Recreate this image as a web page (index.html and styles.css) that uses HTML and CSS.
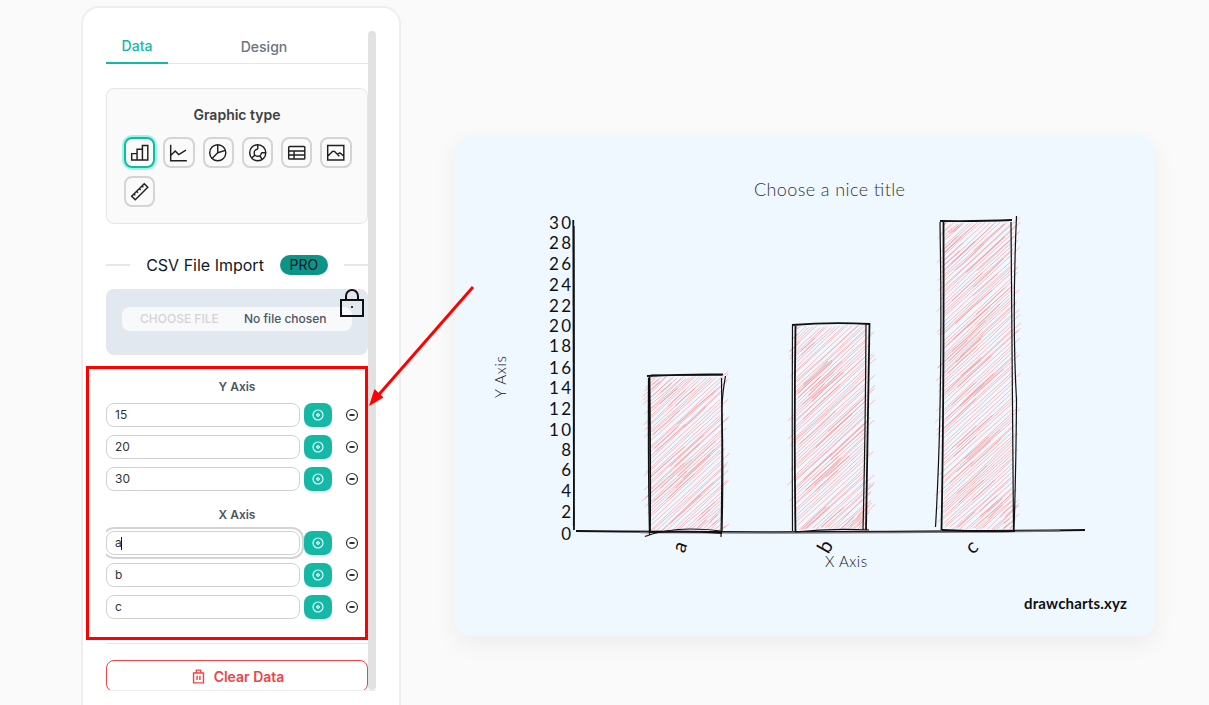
FILE: index.html
```html
<!DOCTYPE html>
<html>
<head>
  <meta charset="utf-8">
  <title>Draw Charts</title>
  <link rel="stylesheet" href="styles.css">
</head>
<body>

<div class="panel">
  <div class="scroll">
    <div class="scroll-body">
      <div class="tabs">
        <div class="tab active">Data</div>
        <div class="tab">Design</div>
      </div>

      <div class="typebox">
        <div class="typebox-title">Graphic type</div>
        <div class="types">
          <div class="type selected"><svg viewBox="0 0 24 24"><path d="M3 13h6v7H3zM9 8h6v12H9zM15 4h6v16h-6zM4 20h16"/></svg></div>
          <div class="type"><svg viewBox="0 0 24 24"><path d="M3 3v18h18M3 15l5-5 4 4 8-5"/></svg></div>
          <div class="type"><svg viewBox="0 0 24 24"><circle cx="12" cy="12" r="9"/><path d="M12 3v9l-6.400 6.400M12 12l8.600-2.600"/></svg></div>
          <div class="type"><svg viewBox="0 0 24 24"><path d="M8.848 14.667l-3.348 2.833M12 3v5m4 4h5M14.219 15.328l2.781 4.172"/><circle cx="12" cy="12" r="9"/><path d="M12 8a4 4 0 1 0 4 4"/></svg></div>
          <div class="type"><svg viewBox="0 0 24 24"><rect x="3" y="5" width="18" height="14" rx="1"/><path d="M3 10h18M3 14.500h18M9 10v9"/></svg></div>
          <div class="type"><svg viewBox="0 0 24 24"><path d="M3 4h18v16H3zM15 8h.01M3 16l5-5c.928-.893 2.072-.893 3 0l5 5M14 14l1-1c.928-.893 2.072-.893 3 0l3 3"/></svg></div>
          <div class="type"><svg viewBox="0 0 24 24"><path d="M17 3l4 4L7 21l-4-4zM16 7l-1.500-1.500M13 10l-1.500-1.500M10 13l-1.500-1.500M7 16l-1.500-1.500"/></svg></div>
        </div>
      </div>

      <div class="csv">
        <span class="csv-line"></span>
        <span class="csv-label">CSV File Import</span>
        <span class="pro">PRO</span>
        <span class="csv-line"></span>
      </div>

      <div class="filebox">
        <div class="fileinput">
          <span class="filebtn">CHOOSE FILE</span>
          <span class="filename">No file chosen</span>
        </div>
        <svg class="lock" viewBox="0 0 26 28"><path d="M2 11h22v16H2zM7 11V7a6 6 0 0 1 12 0v4"/><circle cx="13" cy="18" r="1.100"/></svg>
      </div>

      <div class="axis-title first">Y Axis</div>
      <div class="rows">
        <div class="row">
          <input class="cell" type="text" value="15">
          <div class="add"><svg viewBox="0 0 14 14"><circle cx="7" cy="7" r="5"/><path class="add-plus" d="M7 5v4M5 7h4"/></svg></div>
          <svg class="remove" viewBox="0 0 14 14"><circle cx="7" cy="7" r="5.500"/><path d="M4.500 7h5"/></svg>
        </div>
        <div class="row">
          <input class="cell" type="text" value="20">
          <div class="add"><svg viewBox="0 0 14 14"><circle cx="7" cy="7" r="5"/><path class="add-plus" d="M7 5v4M5 7h4"/></svg></div>
          <svg class="remove" viewBox="0 0 14 14"><circle cx="7" cy="7" r="5.500"/><path d="M4.500 7h5"/></svg>
        </div>
        <div class="row">
          <input class="cell" type="text" value="30">
          <div class="add"><svg viewBox="0 0 14 14"><circle cx="7" cy="7" r="5"/><path class="add-plus" d="M7 5v4M5 7h4"/></svg></div>
          <svg class="remove" viewBox="0 0 14 14"><circle cx="7" cy="7" r="5.500"/><path d="M4.500 7h5"/></svg>
        </div>
      </div>

      <div class="axis-title">X Axis</div>
      <div class="rows">
        <div class="row">
          <input class="cell" type="text" value="a" autofocus>
          <span class="caret"></span>
          <div class="add"><svg viewBox="0 0 14 14"><circle cx="7" cy="7" r="5"/><path class="add-plus" d="M7 5v4M5 7h4"/></svg></div>
          <svg class="remove" viewBox="0 0 14 14"><circle cx="7" cy="7" r="5.500"/><path d="M4.500 7h5"/></svg>
        </div>
        <div class="row">
          <input class="cell" type="text" value="b">
          <div class="add"><svg viewBox="0 0 14 14"><circle cx="7" cy="7" r="5"/><path class="add-plus" d="M7 5v4M5 7h4"/></svg></div>
          <svg class="remove" viewBox="0 0 14 14"><circle cx="7" cy="7" r="5.500"/><path d="M4.500 7h5"/></svg>
        </div>
        <div class="row">
          <input class="cell" type="text" value="c">
          <div class="add"><svg viewBox="0 0 14 14"><circle cx="7" cy="7" r="5"/><path class="add-plus" d="M7 5v4M5 7h4"/></svg></div>
          <svg class="remove" viewBox="0 0 14 14"><circle cx="7" cy="7" r="5.500"/><path d="M4.500 7h5"/></svg>
        </div>
      </div>

      <div class="sep"></div>

      <div class="clear">
        <svg viewBox="0 0 24 24"><path d="M4 7h16M10 11v6M14 11v6M5 7v14h14V7M9 7V3h6v4"/></svg>
        Clear Data
      </div>
    </div>
    <div class="scrollbar"></div>
  </div>
</div>

<div class="chart">
  <svg id="sketch" viewBox="455 136 700 500" width="700" height="500">
    <g id="hachure"></g>

    <g class="ink">
      <path class="thick" d="M573.300 220 Q573 380 574 530"/>
      <path d="M574 226 Q574.500 400 573.500 526"/>
      <path class="thick" d="M576 531 Q800 533.500 1085 530"/>
      <path class="grey" d="M640 532.500 Q850 534 1060 531"/>

      <path class="thick" d="M647 376 Q690 374 723 374.500"/>
      <path d="M651 375 Q690 375.500 722 375"/>
      <path class="thick" d="M649.500 377 Q650.500 460 650 533"/>
      <path d="M648.500 378 Q648 470 649.500 535"/>
      <path d="M721.500 378 Q722.500 460 721 537"/>
      <path d="M725.500 376 Q722 395 722 410 Q723.500 470 722 532"/>
      <path d="M645 536.500 Q665 529 690 529 Q710 529 723 531.500"/>
      <path class="thick" d="M651 532 Q690 531 722 533"/>

      <path class="thick" d="M792 325 Q830 322 870 324"/>
      <path class="thick" d="M795.500 326 Q794 430 795.500 532"/>
      <path d="M792.500 325 Q792 430 792.500 531"/>
      <path class="thick" d="M869.500 323 Q868 430 866 530"/>
      <path d="M866 323 Q865.500 430 863 530"/>
      <path d="M795 532 Q830 528 869 530"/>

      <path class="thick" d="M940 221 Q980 221.500 1012 220"/>
      <path class="thick" d="M943.500 221 Q944 400 941.500 530"/>
      <path d="M940 222 Q943 400 935.500 527"/>
      <path d="M1011 222 Q1013 400 1013.500 530"/>
      <path d="M1016.500 216 Q1012 320 1016.500 400 Q1016 470 1014 530"/>
      <path class="thick" d="M942 530 Q980 532 1015 531"/>
    </g>

    <text class="title" x="754" y="196" textLength="151">Choose a nice title</text>

    <g class="ticks">
      <text x="571" y="229" textLength="22">30</text>
      <text x="571" y="249" textLength="22">28</text>
      <text x="571" y="270" textLength="22">26</text>
      <text x="571" y="291" textLength="22">24</text>
      <text x="571" y="312" textLength="22">22</text>
      <text x="571" y="332" textLength="22">20</text>
      <text x="571" y="352" textLength="22">18</text>
      <text x="571" y="374" textLength="22">16</text>
      <text x="571" y="394" textLength="22">14</text>
      <text x="571" y="415" textLength="22">12</text>
      <text x="571" y="436" textLength="22">10</text>
      <text x="571" y="456">8</text>
      <text x="571" y="476">6</text>
      <text x="571" y="497">4</text>
      <text x="571" y="518">2</text>
      <text x="571" y="540">0</text>
    </g>

    <text class="xlabel" transform="translate(686 549) rotate(-70)">a</text>
    <text class="xlabel" transform="translate(831 550) rotate(-60)">b</text>
    <text class="xlabel" transform="translate(976 552) rotate(-40)">c</text>

    <text class="axis-name" x="825" y="567" textLength="42">X Axis</text>
    <text class="axis-name" transform="translate(506 398) rotate(-90)" textLength="42">Y Axis</text>

    <text class="mark" x="1024" y="609" textLength="103">drawcharts.xyz</text>
  </svg>
</div>

<svg class="annotation" viewBox="0 0 1209 705">
  <rect class="note-box" x="87.500" y="367.500" width="279" height="271"/>
  <path class="note-line" d="M473 287L375 399"/>
  <path class="note-head" d="M369 406L374.500 389L383.500 397.500z"/>
</svg>

<script src="chart.js"></script>
</body>
</html>
```
FILE: styles.css
```css
* {box-sizing: border-box;}
html, body {height: 100%;}
body {margin: 0; background-color: #fafafa; font-family: Inter, "Liberation Sans", sans-serif; display: flex; align-items: flex-start; overflow: hidden; position: relative;}

.panel {flex: none; width: 320px; height: 699px; margin: 6px 0 0 81px; padding: 23px 0 0 23px; background-color: #fff; border: 2px solid #eee; border-bottom: 0; border-radius: 18px 18px 0 0;}
.scroll {display: flex; width: 270px; height: 660px; border-bottom: 1px solid #eee;}
.scroll-body {flex: none; width: 262px; height: 659px; overflow: hidden;}
.scrollbar {flex: none; width: 8px; height: 659px; background-color: #e2e2e2; border-radius: 4px;}

.tabs {display: flex; height: 33px; border-bottom: 1px solid #e5e7eb;}
.tab {height: 33px; padding-top: 7px; font-size: 14px; font-weight: 500; line-height: 18px; color: #6b7280; text-align: center; width: 192px;}
.tab.active {width: 62px; padding-top: 6px; color: #14b8a6; border-bottom: 2px solid #14b8a6;}

.typebox {height: 136px; margin-top: 24px; padding: 16px 0 0 17px; background-color: #fafafa; border: 1px solid #e5e5e5; border-radius: 8px;}
.typebox-title {padding-right: 17px; font-size: 14px; font-weight: 600; line-height: 20px; color: #404040; text-align: center;}
.types {display: flex; flex-wrap: wrap; gap: 8px; margin-top: 12px;}
.type {width: 31.300px; height: 31px; display: flex; align-items: center; justify-content: center; border: 2px solid #d4d4d4; border-radius: 8px;}
.type.selected {border-color: #14b8a6; box-shadow: 0 0 0 2px #99f6e4;}
.type svg {flex: none; width: 21.500px; height: 21.500px; fill: none; stroke: #1f1f1f; stroke-width: 1.600;}

.csv {display: flex; align-items: center; gap: 16px; height: 20px; margin-top: 31px;}
.csv-line {flex: 1; height: 2px; background-color: #e5e7eb;}
.csv-label {font-size: 16px; line-height: 20px; color: #111827;}
.pro {width: 48px; height: 20px; font-size: 14px; line-height: 20px; color: #111827; text-align: center; background-color: #0d9488; border-radius: 10px;}

.filebox {position: relative; height: 66px; margin-top: 14px; padding: 18px 16px 0 16px; background-color: #e2e8f0; border-radius: 8px;}
.fileinput {display: flex; align-items: center; height: 24px; padding-left: 18px; padding-bottom: 1px; font-size: 12px; background-color: #f8f9fa; border-radius: 8px;}
.filebtn {width: 104px; font-weight: 500; color: #d4d4d4;}
.filename {font-weight: 500; color: #4b5563;}
.lock {position: absolute; top: 0; right: 3px; width: 26px; height: 28px; fill: none; stroke: #111; stroke-width: 2;}
.lock circle {fill: #111; stroke: none;}

.axis-title {margin-top: 16px; font-size: 12px; font-weight: 600; line-height: 16px; color: #4b5563; text-align: center;}
.axis-title.first {margin-top: 24px;}
.rows {display: flex; flex-direction: column; gap: 8px; margin-top: 8px;}
.row {position: relative; display: flex; align-items: center; height: 24px;}
.cell {width: 194px; height: 24px; padding: 0 8px 2px 8px; font-family: inherit; font-size: 12px; color: #333; background-color: #fff; border: 1px solid #d1d1d1; border-radius: 8px; outline: none;}
.cell:focus {caret-color: transparent; box-shadow: 0 0 0 2px #fff, 0 0 0 4px #d4d4d4;}
.caret {position: absolute; top: 6px; left: 15px; width: 1px; height: 13px; background-color: #111;}
.add {width: 28px; height: 24px; margin-left: 4px; display: flex; align-items: center; justify-content: center; background-color: #14b8a6; border-radius: 8px;}
.add svg {width: 14px; height: 14px; fill: none; stroke: #e6faf7; stroke-width: 1.200;}
.add-plus {stroke: #a7ebe2; stroke-width: 2;}
.remove {width: 14px; height: 14px; margin-left: 13px; fill: none; stroke: #333; stroke-width: 1.200;}
.remove path {stroke-width: 2;}

.sep {height: 1px; margin-top: 24px; background-color: #e5e7eb;}
.clear {display: flex; align-items: center; justify-content: center; gap: 7px; height: 32px; margin-top: 16px; font-size: 14px; font-weight: 600; color: #ef4444; border: 1px solid #ef4444; border-radius: 8px;}
.clear svg {width: 17px; height: 17px; fill: none; stroke: #ef4444; stroke-width: 2;}

.chart {flex: none; width: 700px; height: 500px; margin: 136px 0 0 54px; background-color: #f0f8ff; border-radius: 16px; box-shadow: 0 8px 24px rgba(0, 0, 0, .06);}
.chart svg {display: block; font-family: Lato, "Open Sans", sans-serif; font-weight: 300;}
.ink path {fill: none; stroke: #111; stroke-width: 1.200;}
.ink path.thick {stroke-width: 1.800;}
.ink path.grey {stroke: #777; stroke-width: 1.500;}
.title {font-size: 18px; fill: #333;}
.ticks text {font-size: 17px; font-weight: 400; fill: #111; text-anchor: end;}
.xlabel {font-size: 20px; font-weight: 400; fill: #111; text-anchor: middle;}
.axis-name {font-size: 15px; fill: #111;}
.mark {font-size: 15px; font-weight: 700; fill: #111;}

.annotation {position: absolute; top: 0; left: 0; width: 1209px; height: 705px; pointer-events: none;}
.note-box {fill: none; stroke: #f00; stroke-width: 3;}
.note-line {fill: none; stroke: #f00; stroke-width: 3;}
.note-head {fill: #f00;}
```
FILE: chart.js
```js
// pink scribble fill for the three bars, same seed each time so it stays put
var seed = 11;
function rnd() {
  seed = (seed * 16807) % 2147483647;
  return seed / 2147483647;
}

var bars = [
  {left: 650, right: 722, top: 376, bottom: 531},
  {left: 795, right: 868, top: 325, bottom: 530},
  {left: 943, right: 1013, top: 222, bottom: 530}
];

var group = document.getElementById('hachure');

function addPath(d, color, width) {
  var p = document.createElementNS('http://www.w3.org/2000/svg', 'path');
  p.setAttribute('d', d);
  p.setAttribute('fill', 'none');
  p.setAttribute('stroke', color);
  p.setAttribute('stroke-width', width);
  group.appendChild(p);
}

function stroke(ax, ay, bx, by) {
  var mx = (ax + bx) / 2 + (rnd() - 0.5) * 3;
  var my = (ay + by) / 2 + (rnd() - 0.5) * 3;
  return 'M' + ax.toFixed(1) + ' ' + ay.toFixed(1) +
    'Q' + mx.toFixed(1) + ' ' + my.toFixed(1) + ' ' + bx.toFixed(1) + ' ' + by.toFixed(1);
}

bars.forEach(function (bar) {
  var light = '', strong = '';
  var slope = 0.92;
  var c = bar.top + bar.left * slope;
  var end = bar.bottom + bar.right * slope;

  while (c < end) {
    var x1 = Math.max(bar.left, (c - bar.bottom) / slope);
    var x2 = Math.min(bar.right, (c - bar.top) / slope);

    if (x2 > x1) {
      // lines run past the bar on some sides, like a pen that does not stop in time
      var ax = x1 + (x1 == bar.left && rnd() > 0.5 ? -rnd() * 8 : rnd() * 2);
      var bx = x2 + (x2 == bar.right && rnd() > 0.5 ? rnd() * 8 : -rnd() * 2);
      var ay = c - ax * slope + (rnd() - 0.5) * 3;
      var by = c - bx * slope + (rnd() - 0.5) * 3;
      light += stroke(ax, ay, bx, by);

      // some lines get a darker second pass over part of their length
      if (rnd() > 0.55) {
        var t1 = rnd() * 0.5, t2 = t1 + 0.3 + rnd() * 0.2;
        strong += stroke(ax + (bx - ax) * t1, ay + (by - ay) * t1, ax + (bx - ax) * t2, ay + (by - ay) * t2);
      }
    }
    c += 2.2 + rnd() * 2.4;
  }

  addPath(light, 'rgba(250,140,140,.55)', 1);
  addPath(strong, 'rgba(248,125,125,.4)', 1.2);
});
```
